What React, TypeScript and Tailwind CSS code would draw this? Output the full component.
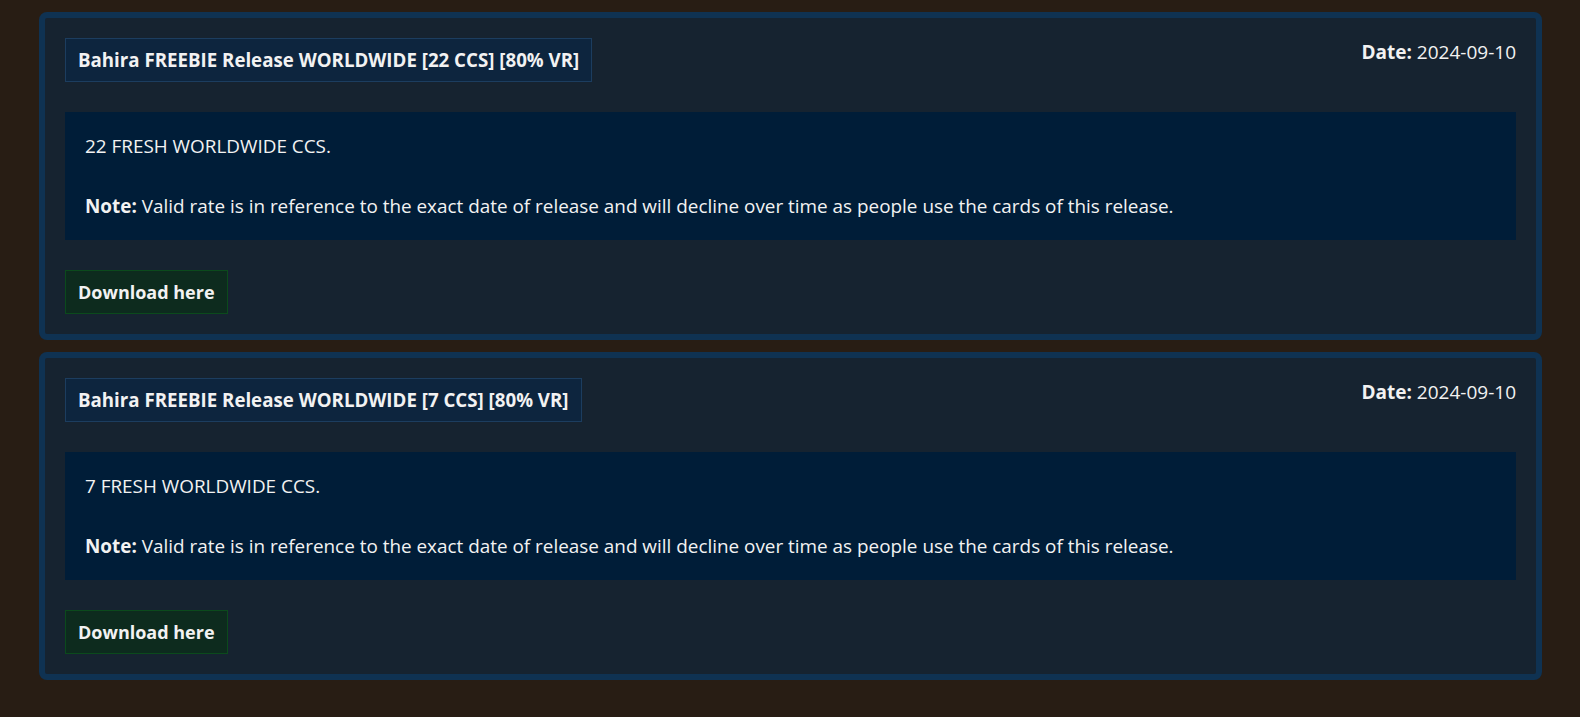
import React from "react"

type Release = {
  title: string
  date: string
  summary: string
}

const releases: Release[] = [
  {
    title: "Bahira FREEBIE Release WORLDWIDE [22 CCS] [80% VR]",
    date: "2024-09-10",
    summary: "22 FRESH WORLDWIDE CCS.",
  },
  {
    title: "Bahira FREEBIE Release WORLDWIDE [7 CCS] [80% VR]",
    date: "2024-09-10",
    summary: "7 FRESH WORLDWIDE CCS.",
  },
]

const ReleaseCard: React.FC<{ release: Release }> = ({ release }) => {
  return (
    <div className="rounded-lg border-[6px] border-[#0f3252] bg-[#162330] p-5">
      {/* header */}
      <div className="flex items-start justify-between">
        <div className="border border-[#1c3d5f] bg-[#0d253e] px-3 py-[9px] text-[18.7px] font-bold leading-6">
          {release.title}
        </div>
        <div className="pt-[2px] text-[19px] leading-6">
          <span className="font-bold">Date:</span> {release.date}
        </div>
      </div>

      {/* body */}
      <div className="mt-[30px] flex flex-col gap-[33px] bg-[#001d38] p-5 text-[18.9px] leading-[27px]">
        <p className="pt-px">{release.summary}</p>
        <p>
          <span className="font-bold">Note:</span> Valid rate is in reference to the exact date of release and will
          decline over time as people use the cards of this release.
        </p>
      </div>

      {/* download */}
      <div className="mt-[30px] flex">
        <a
          href="#"
          className="border border-[#0b4a1c] bg-[#0d2b1e] px-3 py-[9px] text-[18px] font-bold leading-6 text-[#f2f2f2]"
        >
          Download here
        </a>
      </div>
    </div>
  )
}

export default function App() {
  return (
    <div
      className="min-h-screen bg-[#281d14] pl-[39px] pr-[38px] pt-3 text-[#f2f2f2]"
      style={{ fontFamily: '"Open Sans", "Noto Sans", sans-serif' }}
    >
      <div className="flex flex-col gap-3">
        {releases.map((r) => (
          <ReleaseCard key={r.title} release={r} />
        ))}
      </div>
    </div>
  )
}
